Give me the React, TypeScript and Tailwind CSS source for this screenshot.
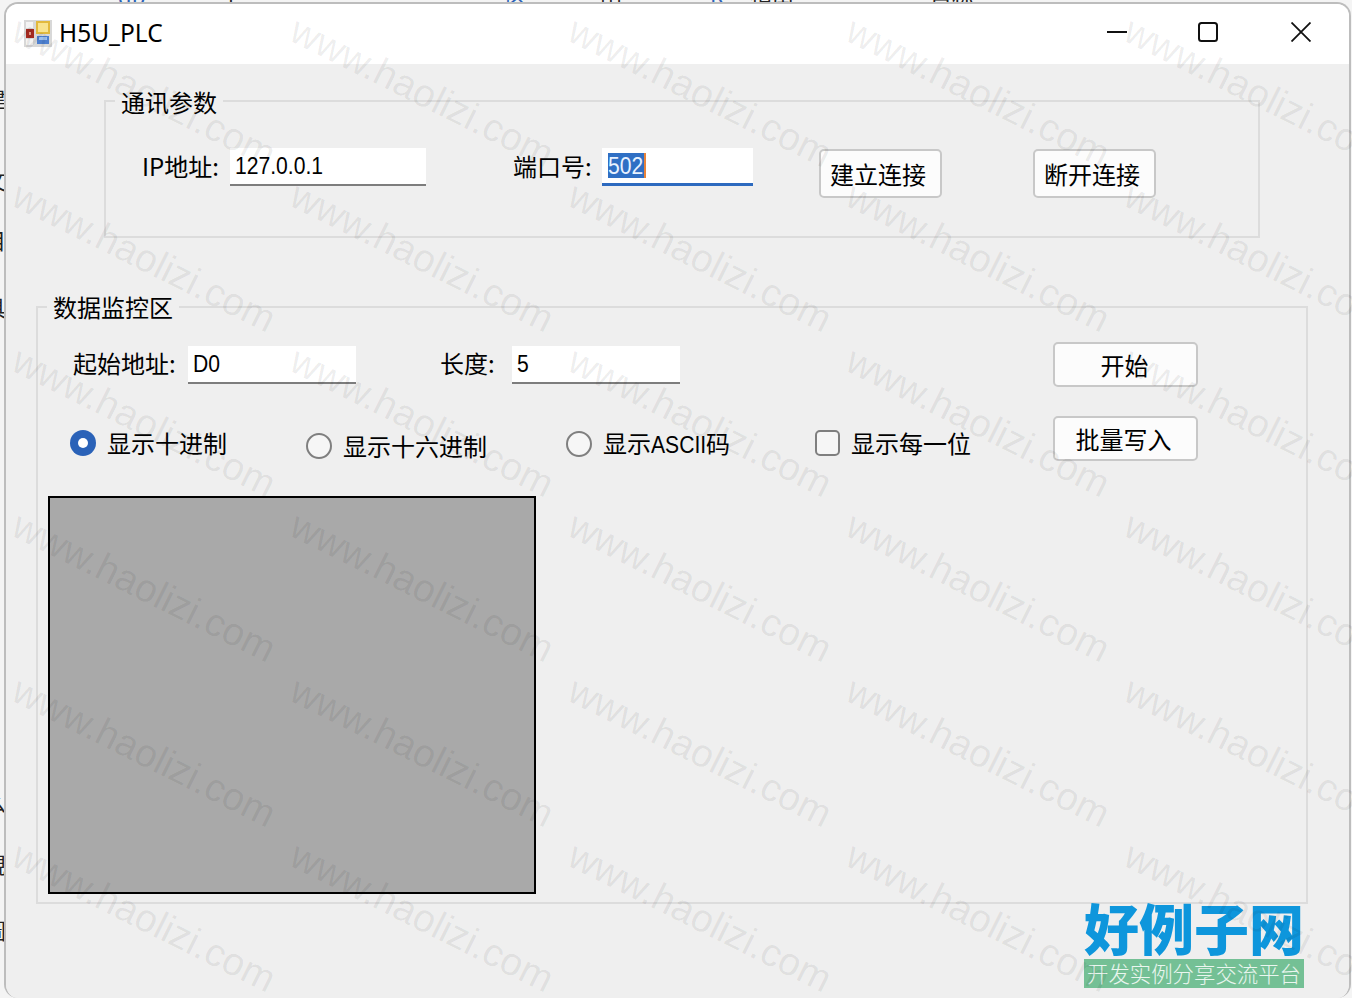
const cjk = "font-['Noto_Sans_CJK_SC','Liberation_Sans',sans-serif]";

function Watermarks() {
  const cols = [14, 292, 570, 848, 1126];
  const rows = [20, 185, 350, 515, 680, 845];
  return (
    <div className="pointer-events-none absolute inset-0 overflow-hidden">
      {rows.map((y) =>
        cols.map((x) => (
          <span
            key={`${x}-${y}`}
            className="absolute origin-top-left rotate-[26.5deg] whitespace-nowrap font-['Liberation_Sans',sans-serif] text-[39px] leading-none text-black/[0.07]"
            style={{ left: x + 10, top: y - 10 }}
          >
            www.haolizi.com
          </span>
        )),
      )}
    </div>
  );
}

function AppIcon() {
  return (
    <svg width="28" height="28" viewBox="0 0 28 28" className="shrink-0">
      <rect x="0" y="1" width="28" height="27" fill="#d8d8d8" />
      <rect x="2" y="3" width="7" height="6" fill="#f4f4f4" />
      <rect x="2" y="20" width="7" height="6" fill="#f4f4f4" />
      <rect x="2" y="10" width="8" height="9" fill="#a52a20" />
      <rect x="5" y="13" width="2" height="3" fill="#e8a090" />
      <rect x="12" y="2" width="14" height="13" fill="#e2b93d" />
      <rect x="14" y="4" width="10" height="9" fill="#f8e38e" />
      <rect x="13" y="17" width="12" height="8" fill="#4d7fcf" />
      <rect x="15" y="18" width="8" height="3" fill="#9cc0ee" />
    </svg>
  );
}

function WindowControls() {
  return (
    <div className="mb-[2px] ml-auto flex items-center">
      <svg width="20" height="20" viewBox="0 0 20 20" className="mr-[71px]" stroke="#111" strokeWidth="2" fill="none">
        <path d="M0 10h20" />
      </svg>
      <svg width="20" height="20" viewBox="0 0 20 20" className="mr-[73px]" stroke="#111" strokeWidth="2" fill="none">
        <rect x="1" y="1" width="18" height="18" rx="2.5" />
      </svg>
      <svg width="20" height="20" viewBox="0 0 20 20" className="mr-[38px]" stroke="#111" strokeWidth="1.8" fill="none">
        <path d="M0.5 0.5l19 19M19.5 0.5l-19 19" />
      </svg>
    </div>
  );
}

function Label({ text, className }: { text: string; className: string }) {
  return <div className={`whitespace-nowrap text-[24px] leading-[37px] ${className}`}>{text}</div>;
}

function TextBox({ value, className }: { value: string; className: string }) {
  return (
    <div className={`h-[38px] shrink-0 border-b-[2px] border-[#7d7d7d] bg-white pl-[5px] font-['Liberation_Sans',sans-serif] text-[24px] leading-[35px] ${className}`}>
      <span className="inline-block origin-left scale-x-[0.88]">{value}</span>
    </div>
  );
}

function Btn({ text, className }: { text: string; className: string }) {
  return (
    <button className={`shrink-0 rounded-[5px] border-[2px] border-[#c8c8c8] bg-[#fcfcfc] text-[24px] leading-none text-black ${className}`}>
      {text}
    </button>
  );
}

function Radio({ checked }: { checked?: boolean }) {
  if (checked) {
    return (
      <span className="flex h-[26px] w-[26px] shrink-0 items-center justify-center rounded-full bg-[#2a62b8]">
        <span className="h-[10px] w-[10px] rounded-full bg-white" />
      </span>
    );
  }
  return <span className="h-[26px] w-[26px] shrink-0 rounded-full border-[2px] border-[#7f7f7f] bg-[#f6f6f6]" />;
}

function Option({ control, text, className }: { control: React.ReactNode; text: React.ReactNode; className: string }) {
  return (
    <div className={`flex items-center gap-[11px] whitespace-nowrap text-[24px] leading-[30px] ${className}`}>
      {control}
      <span>{text}</span>
    </div>
  );
}

function Logo() {
  return (
    <div className="absolute bottom-[10px] right-[48px] flex w-[220px] flex-col items-stretch">
      <div className="h-[56px] whitespace-nowrap text-center text-[55px] font-black leading-[47px] text-[#0e96dc]">好例子网</div>
      <div className="h-[29px] whitespace-nowrap bg-[#74c095] text-center text-[21.4px] font-light leading-[28px] text-white/85">开发实例分享交流平台</div>
    </div>
  );
}

// bits of the windows behind, only a few px of them show round the edges
function BehindWindow() {
  const left = [
    ['建', 86], ['文', 168], ['目', 228], ['具', 295], ['c', 358], ['D', 420],
    ['F', 484], ['F', 550], ['/', 628], ['0', 708], ['么', 790], ['視', 852], ['圖', 918],
  ];
  return (
    <div className="absolute inset-0 overflow-hidden bg-[#f4f4f4] text-[22px] leading-none text-[#222]">
      {left.map(([c, y]) => (
        <span key={`${c}${y}`} className="absolute left-[-16px]" style={{ top: Number(y) }}>
          {c}
        </span>
      ))}
      <span className="absolute left-[118px] top-[-16px] text-[#2a62b8]">qb</span>
      <span className="absolute left-[220px] top-[-16px]">工</span>
      <span className="absolute left-[505px] top-[-16px] text-[#2a62b8]">区</span>
      <span className="absolute left-[600px] top-[-16px]">田</span>
      <span className="absolute left-[710px] top-[-16px] text-[#2a62b8]">K</span>
      <span className="absolute left-[750px] top-[-16px]">指南</span>
      <span className="absolute left-[930px] top-[-16px]">目标</span>
    </div>
  );
}

export default function App() {
  return (
    <div className={`relative h-[998px] w-[1352px] overflow-hidden text-black ${cjk}`}>
      <BehindWindow />
      <div className="relative flex h-[998px] flex-col pl-[4px] pr-[1px] pt-[2px]">
        <div className="flex h-full flex-col overflow-hidden rounded-[14px] border-[2px] border-b-0 border-[#bdbdbd]">
          {/* title bar */}
          <div className="flex h-[60px] shrink-0 items-center bg-white pb-[2px] pl-[18px]">
            <AppIcon />
            <span className="ml-[7px] font-['Noto_Sans',sans-serif] text-[24.5px] leading-none">H5U_PLC</span>
            <WindowControls />
          </div>

          <div className="flex-1 bg-[#efefef] pt-[36px]">
            {/* 通讯参数 */}
            <div className="relative ml-[98px] flex h-[138px] w-[1156px] items-start border-[2px] border-[#dcdcdc] pl-[36px] pt-[46px]">
              <div className="absolute left-[9px] top-[-15px] bg-[#efefef] px-[6px] text-[24px] leading-[30px]">通讯参数</div>
              <Label text="IP地址:" className="-mt-[1px] w-[88px]" />
              <TextBox value="127.0.0.1" className="w-[196px]" />
              <Label text="端口号:" className="-mt-[1px] ml-[87px] w-[89px]" />
              <div className="h-[38px] w-[151px] shrink-0 border-b-[3px] border-[#2d6abf] bg-white pl-[6px] pt-[5px]">
                <span className="flex h-[25px] w-[38px] items-center border-r-[2px] border-[#e8833a] bg-[#2f6fc4] font-['Liberation_Sans',sans-serif] text-[24px] text-[#e8f2ff]">
                  <span className="inline-block origin-left scale-x-[0.88]">502</span>
                </span>
              </div>
              <Btn text="建立连接" className="ml-[66px] mt-[1px] h-[49px] w-[123px] pr-[5px]" />
              <Btn text="断开连接" className="ml-[91px] mt-[1px] h-[49px] w-[123px] pr-[5px]" />
            </div>

            {/* 数据监控区 */}
            <div className="relative ml-[30px] mt-[68px] h-[598px] w-[1272px] border-[2px] border-[#dcdcdc] pt-[34px]">
              <div className="absolute left-[9px] top-[-16px] bg-[#efefef] px-[6px] text-[24px] leading-[30px]">数据监控区</div>
              <div className="flex items-start pl-[35px]">
                <Label text="起始地址:" className="mt-[2px] w-[115px]" />
                <TextBox value="D0" className="mt-[4px] w-[168px]" />
                <Label text="长度:" className="ml-[84px] mt-[2px] w-[72px]" />
                <TextBox value="5" className="mt-[4px] w-[168px]" />
                <Btn text="开始" className="ml-[373px] h-[45px] w-[145px] pr-[2px]" />
              </div>
              <div className="mt-[29px] flex h-[45px] items-start pl-[32px]">
                <Option control={<Radio checked />} text="显示十进制" className="mt-[12px] w-[236px]" />
                <Option control={<Radio />} text="显示十六进制" className="mt-[15px] w-[260px]" />
                <Option
                  control={<Radio />}
                  text={
                    <>
                      显示<span className="inline-block w-[55px] origin-left scale-x-[0.88] font-['Liberation_Sans',sans-serif]">ASCII</span>码
                    </>
                  }
                  className="mt-[12px] w-[249px]"
                />
                <Option
                  control={<span className="h-[26px] w-[25px] shrink-0 rounded-[5px] border-[2px] border-[#7f7f7f] bg-[#f6f6f6]" />}
                  text="显示每一位"
                  className="mt-[12px] w-[238px]"
                />
                <Btn text="批量写入" className="h-[45px] w-[145px] pr-[4px]" />
              </div>
              <div className="ml-[10px] mt-[35px] h-[398px] w-[488px] border-[2px] border-black bg-[#a9a9a9]" />
            </div>
          </div>
        </div>
      </div>
      <Logo />
      <Watermarks />
    </div>
  );
}
